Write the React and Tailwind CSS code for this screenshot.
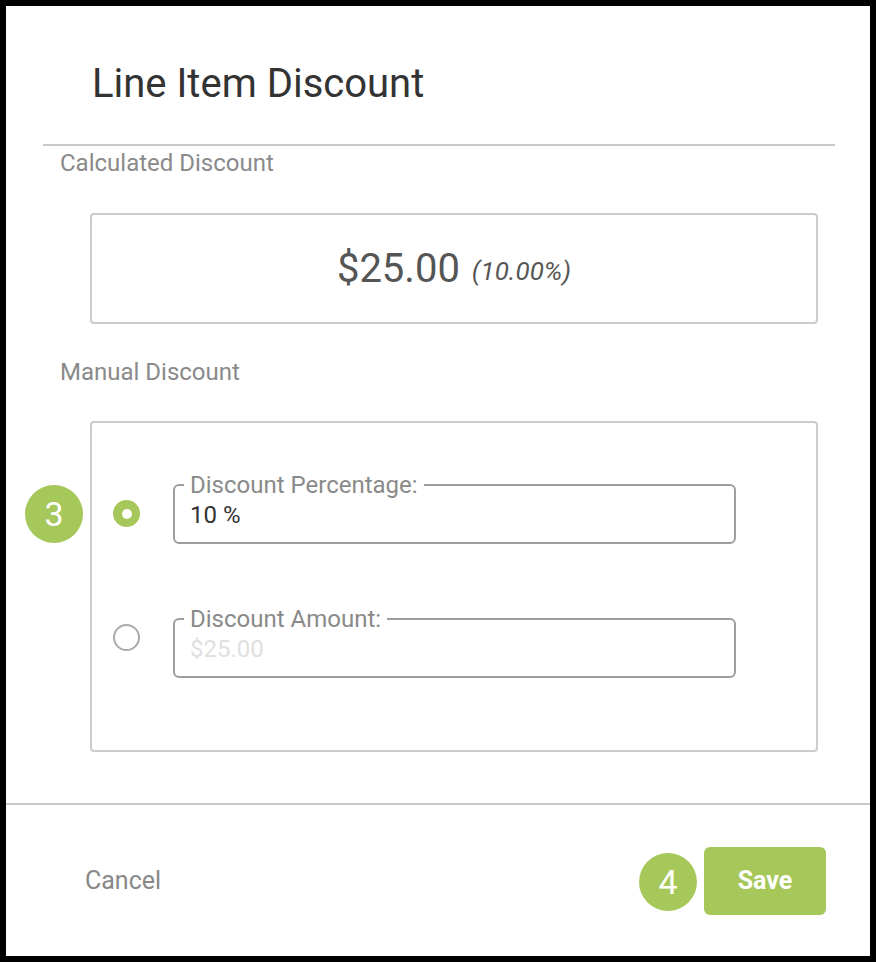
import React, { useState } from "react";

const GREEN = "bg-[#a6c85a]";

const Badge = ({ n, className }) => (
  <div
    className={`absolute ${className} w-[58px] h-[58px] rounded-full ${GREEN} text-white text-[34px] flex items-center justify-center leading-none`}
  >
    {n}
  </div>
);

const Radio = ({ checked, onClick, className }) => (
  <button
    onClick={onClick}
    className={`w-[27px] h-[27px] rounded-full flex items-center justify-center shrink-0 ${className} ${
      checked ? GREEN : "border-2 border-[#aaaaaa] bg-white"
    }`}
  >
    {checked && <span className="w-[10px] h-[10px] rounded-full bg-white" />}
  </button>
);

const Field = ({ label, value, disabled }) => (
  <fieldset className="w-[563px] h-[72px] border-2 border-[#9e9e9e] rounded-[6px] px-[15px] -mt-[13px]">
    <legend className="ml-[-6px] px-[6px] text-[24px] leading-[26px] text-[#8a8a8a]">{label}</legend>
    <div className={`text-[24px] leading-[28px] mt-[3px] ${disabled ? "text-[#e0e0e0]" : "text-[#333333]"}`}>
      {value}
    </div>
  </fieldset>
);

export default function App() {
  const [mode, setMode] = useState("percent");

  return (
    <div className="w-[876px] h-[962px] bg-black p-[6px] font-['Roboto',sans-serif]">
      <div className="relative w-full h-full bg-white flex flex-col">
        <div className="pt-[54px] pl-[86px] h-[138px]">
          <h1 className="text-[40px] leading-[48px] text-[#333333]">Line Item Discount</h1>
        </div>
        <div className="ml-[37px] mr-[35px] h-[2px] bg-[#c8c8c8]" />

        <div className="pl-[54px] pr-[52px] flex-1">
          <div className="text-[24px] leading-[28px] text-[#8a8a8a] mt-[3px]">Calculated Discount</div>
          <div className="ml-[30px] mt-[36px] h-[111px] border-2 border-[#cccccc] rounded-[4px] flex items-center justify-center gap-[12px] text-[#555555]">
            <span className="text-[40px] leading-none">$25.00</span>
            <span className="text-[26px] italic leading-none mt-[4px]">(10.00%)</span>
          </div>

          <div className="text-[24px] leading-[28px] text-[#8a8a8a] mt-[34px]">Manual Discount</div>
          <div className="ml-[30px] mt-[35px] h-[331px] border-2 border-[#cccccc] rounded-[4px] pl-[21px] pt-[62px]">
            <div className="flex items-start gap-[33px]">
              <Radio className="mt-[15px]" checked={mode === "percent"} onClick={() => setMode("percent")} />
              <Field label="Discount Percentage:" value="10 %" disabled={mode !== "percent"} />
            </div>
            <div className="flex items-start gap-[33px] mt-[75px]">
              <Radio className="mt-[5px]" checked={mode === "amount"} onClick={() => setMode("amount")} />
              <Field label="Discount Amount:" value="$25.00" disabled={mode !== "amount"} />
            </div>
          </div>
        </div>

        <div className="h-[2px] bg-[#c8c8c8] mb-[42px]" />
        <div className="flex items-center justify-between pl-[79px] pr-[44px] mb-[41px]">
          <button className="text-[25px] text-[#888888]">Cancel</button>
          <button className={`w-[122px] h-[68px] rounded-[6px] ${GREEN} text-white text-[25px] font-bold`}>
            Save
          </button>
        </div>

        <Badge n="3" className="left-[19px] top-[479px]" />
        <Badge n="4" className="left-[633px] top-[847px]" />
      </div>
    </div>
  );
}
